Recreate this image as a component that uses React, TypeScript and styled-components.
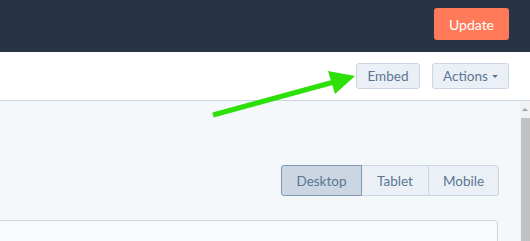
import React from "react";
import styled, { createGlobalStyle } from "styled-components";

const Global = createGlobalStyle`
  html, body { margin: 0; padding: 0; overflow: hidden; }
  body { width: 530px; height: 241px; font-family: "Lato", "Noto Sans", sans-serif; }
  * { box-sizing: border-box; }
`;

const Page = styled.div`
  position: relative;
  width: 530px;
  height: 241px;
  display: flex;
  flex-direction: column;
  overflow: hidden;
`;

const TopBar = styled.div`
  flex-shrink: 0;
  height: 52px;
  background: #273445;
  display: flex;
  align-items: flex-start;
  justify-content: flex-end;
  padding: 8px 21px 0 0;
`;

const PrimaryButton = styled.button`
  width: 75px;
  height: 32px;
  border: none;
  border-radius: 3px;
  background: #ff7a59;
  color: #fff;
  font-family: inherit;
  font-size: 14px;
  padding: 0;
`;

const Header = styled.div`
  flex-shrink: 0;
  height: 49px;
  background: #fff;
  border-bottom: 1px solid #cbd6e2;
  display: flex;
  justify-content: flex-end;
  align-items: flex-start;
  gap: 12px;
  padding: 11px 21px 0 0;
`;

const SecondaryButton = styled.button<{ $w: number }>`
  width: ${(p) => p.$w}px;
  height: 26px;
  border: 1px solid #cbd6e2;
  border-radius: 3px;
  background: #eaf0f6;
  color: #5a7594;
  font-family: inherit;
  font-size: 13.5px;
  padding: 0;
  display: flex;
  align-items: center;
  justify-content: center;
  gap: 4px;
`;

const Caret = styled.span`
  width: 0;
  height: 0;
  border-left: 3px solid transparent;
  border-right: 3px solid transparent;
  border-top: 3px solid #5a7594;
  margin-top: 1px;
`;

const Body = styled.div`
  flex: 1;
  min-height: 0;
  overflow: hidden;
  display: flex;
  background: #f5f8fa;
`;

const Main = styled.div`
  flex: 1;
  display: flex;
  flex-direction: column;
  align-items: flex-end;
  padding: 64px 21px 0 0;
`;

const Tabs = styled.div`
  flex-shrink: 0;
  display: flex;
  height: 31px;
`;

const Tab = styled.div<{ $w: number; $active?: boolean; $pos: "first" | "mid" | "last" }>`
  width: ${(p) => p.$w}px;
  display: flex;
  align-items: center;
  justify-content: center;
  font-size: 13.5px;
  color: #5a7594;
  background: ${(p) => (p.$active ? "#cbd6e2" : "#eaf0f6")};
  border: 1px solid ${(p) => (p.$active ? "#7c98b6" : "#cbd6e2")};
  margin-left: ${(p) => (p.$pos === "first" ? 0 : -1)}px;
  position: ${(p) => (p.$active ? "relative" : "static")};
  z-index: ${(p) => (p.$active ? 1 : 0)};
  border-radius: ${(p) =>
    p.$pos === "first" ? "3px 0 0 3px" : p.$pos === "last" ? "0 3px 3px 0" : "0"};
`;

const Card = styled.div`
  flex-shrink: 0;
  margin-top: 24px;
  margin-right: 1px;
  align-self: stretch;
  margin-left: -10px;
  height: 60px;
  background: #f8fafc;
  border: 1px solid #cbd6e2;
  border-radius: 4px;
`;

const Scrollbar = styled.div`
  width: 10px;
  background: #f1f1f1;
  display: flex;
  flex-direction: column;
  align-items: center;
`;

const ScrollArrow = styled.div`
  height: 17px;
  width: 100%;
  display: flex;
  align-items: center;
  justify-content: center;
  &::before {
    content: "";
    border-left: 3px solid transparent;
    border-right: 3px solid transparent;
    border-bottom: 3px solid #a3a3a3;
  }
`;

const Thumb = styled.div`
  flex: 1;
  width: 9px;
  margin-left: 1px;
  background: #c1c1c1;
`;

const Annotation = styled.svg`
  position: absolute;
  left: 0;
  top: 0;
  pointer-events: none;
`;

export default function App() {
  return (
    <>
      <Global />
      <Page>
        <TopBar>
          <PrimaryButton>Update</PrimaryButton>
        </TopBar>
        <Header>
          <SecondaryButton $w={64}>Embed</SecondaryButton>
          <SecondaryButton $w={77}>
            Actions <Caret />
          </SecondaryButton>
        </Header>
        <Body>
          <Main>
            <Tabs>
              <Tab $w={81} $active $pos="first">Desktop</Tab>
              <Tab $w={68} $pos="mid">Tablet</Tab>
              <Tab $w={71} $pos="last">Mobile</Tab>
            </Tabs>
            <Card />
          </Main>
          <Scrollbar>
            <ScrollArrow />
            <Thumb />
          </Scrollbar>
        </Body>
        <Annotation width="530" height="241" viewBox="0 0 530 241">
          <line x1="213" y1="115" x2="334" y2="82" stroke="#2ee00a" strokeWidth="5" />
          <polygon points="328,71 355,76 335,94" fill="#2ee00a" />
        </Annotation>
      </Page>
    </>
  );
}
